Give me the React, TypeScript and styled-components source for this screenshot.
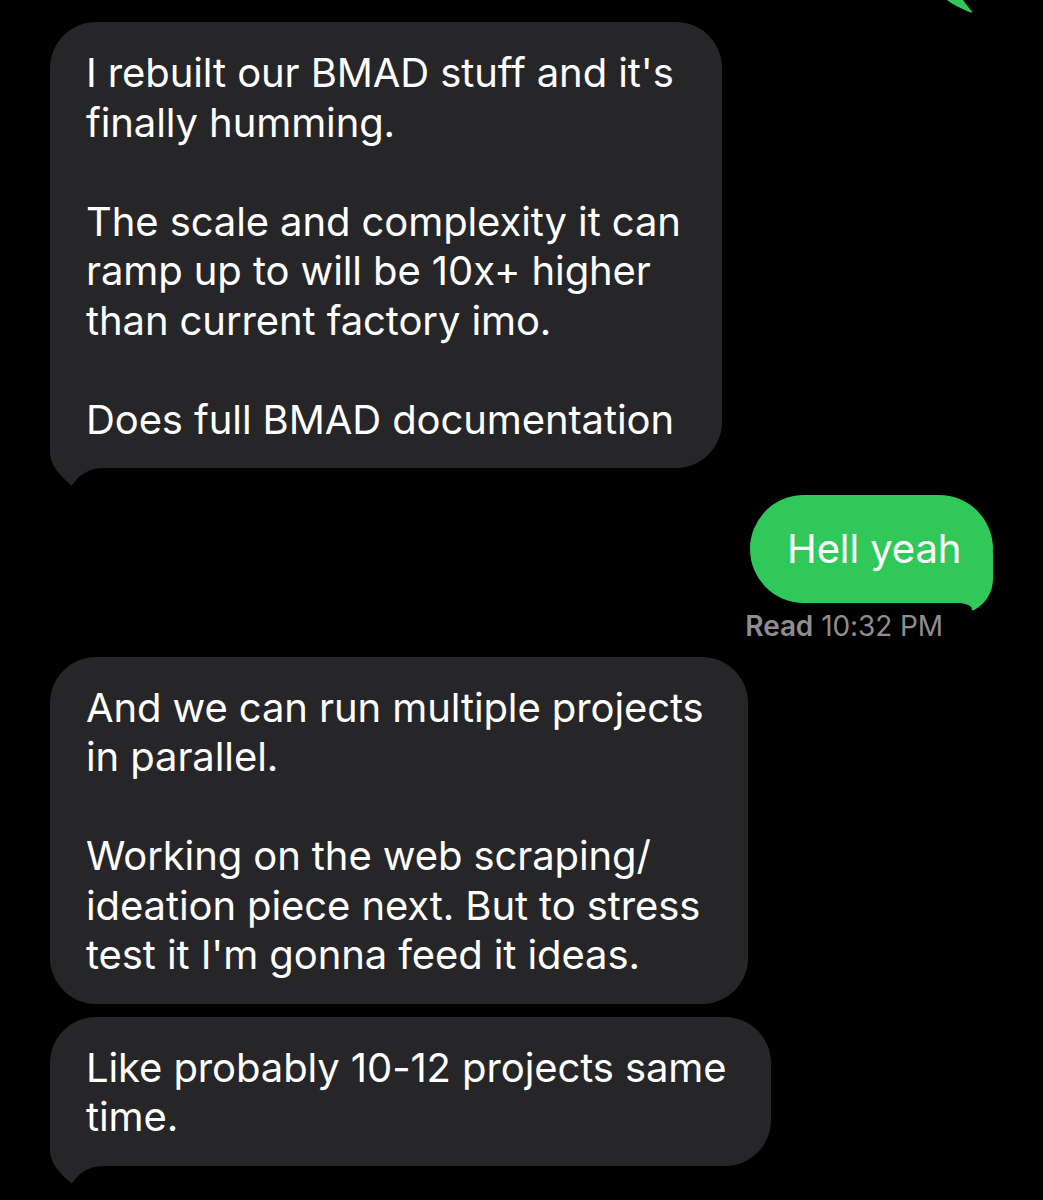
import styled, { createGlobalStyle } from "styled-components";

const GlobalStyle = createGlobalStyle`
  html, body {
    margin: 0;
    padding: 0;
    background: #000;
  }
  body {
    font-family: "Inter", "Liberation Sans", sans-serif;
    -webkit-font-smoothing: antialiased;
  }
`;

const Page = styled.div`
  width: 1043px;
  height: 1200px;
  overflow: hidden;
  background: #000;
  padding: 0 50px;
  box-sizing: border-box;
  display: flex;
  flex-direction: column;
`;

const TopTailRow = styled.div`
  display: flex;
  justify-content: flex-end;
  padding-right: 18px;
  height: 13px;
`;

const Row = styled.div<{ $out?: boolean; $gap: number }>`
  display: flex;
  justify-content: ${(p) => (p.$out ? "flex-end" : "flex-start")};
  margin-top: ${(p) => p.$gap}px;
`;

const Bubble = styled.div<{ $out?: boolean; $w: number }>`
  position: relative;
  width: ${(p) => p.$w}px;
  box-sizing: border-box;
  border-radius: ${(p) => (p.$out ? "54px" : "46px")};
  background: ${(p) => (p.$out ? "#31c85a" : "#262629")};
  color: #fff;
  font-size: 40px;
  line-height: 49.5px;
  letter-spacing: -0.1px;
  padding: ${(p) => (p.$out ? "29px 30px 29px 37px" : "26px 30px 24px 36px")};
  white-space: pre;
`;

const BubbleText = styled.span`
  position: relative;
  z-index: 1;
`;

const Tail = styled.svg<{ $out?: boolean }>`
  position: absolute;
  z-index: 0;
  ${(p) => (p.$out ? "right: 0;" : "left: 0;")}
  top: calc(100% - ${(p) => (p.$out ? 50 : 46)}px);
  display: block;
  overflow: visible;
`;

const Receipt = styled.div`
  align-self: flex-end;
  margin: 6px 50px 0 0;
  font-size: 28px;
  line-height: 34px;
  color: #8d8d92;
  letter-spacing: -0.1px;

  b {
    font-weight: 600;
    margin-right: 8px;
  }
`;

function InTail() {
  return (
    <Tail width="60" height="66" viewBox="0 0 60 66">
      <path
        d="M0,0 H60 V46 H54 C43,46 34,50 28,56 C26,58.2 24,61 22.4,62.6 C21.2,63.6 19.8,63.2 20.1,62 C14,57 0,45 0,30 Z"
        fill="#262629"
      />
    </Tail>
  );
}

function OutTail() {
  return (
    <Tail $out width="60" height="60" viewBox="0 0 60 60">
      <path
        d="M0,0 H60 V26 C60,40 52,51 41.5,56.8 C40.2,57.5 38.8,57.6 38.6,56.8 C38.4,56 39,55.3 38.6,54.6 C36,51.5 31,50 24,50 H0 Z"
        fill="#31c85a"
      />
    </Tail>
  );
}

interface MessageProps {
  text: string;
  width: number;
  gap: number;
  out?: boolean;
  tail?: boolean;
}

function Message({ text, width, gap, out, tail }: MessageProps) {
  return (
    <Row $out={out} $gap={gap}>
      <Bubble $out={out} $w={width}>
        {tail && (out ? <OutTail /> : <InTail />)}
        <BubbleText>{text}</BubbleText>
      </Bubble>
    </Row>
  );
}

export default function App() {
  return (
    <>
      <GlobalStyle />
      <Page>
        <TopTailRow>
          <svg width="28" height="13" viewBox="0 0 28 13">
            <path
              d="M0,0 H16 C19,4 22,8 25,11.5 C25.6,12.4 24.8,13 23.8,12.6 C15,9 6,5 0,0 Z"
              fill="#31c85a"
            />
          </svg>
        </TopTailRow>
        <Message
          gap={9}
          width={672}
          tail
          text={
            "I rebuilt our BMAD stuff and it's\nfinally humming.\n\nThe scale and complexity it can\nramp up to will be 10x+ higher\nthan current factory imo.\n\nDoes full BMAD documentation"
          }
        />
        <Message out tail gap={27} width={243} text="Hell yeah" />
        <Receipt>
          <b>Read</b>10:32 PM
        </Receipt>
        <Message
          gap={14}
          width={698}
          text={
            "And we can run multiple projects\nin parallel.\n\nWorking on the web scraping/\nideation piece next. But to stress\ntest it I'm gonna feed it ideas."
          }
        />
        <Message
          gap={13}
          width={721}
          tail
          text={"Like probably 10-12 projects same\ntime."}
        />
      </Page>
    </>
  );
}
